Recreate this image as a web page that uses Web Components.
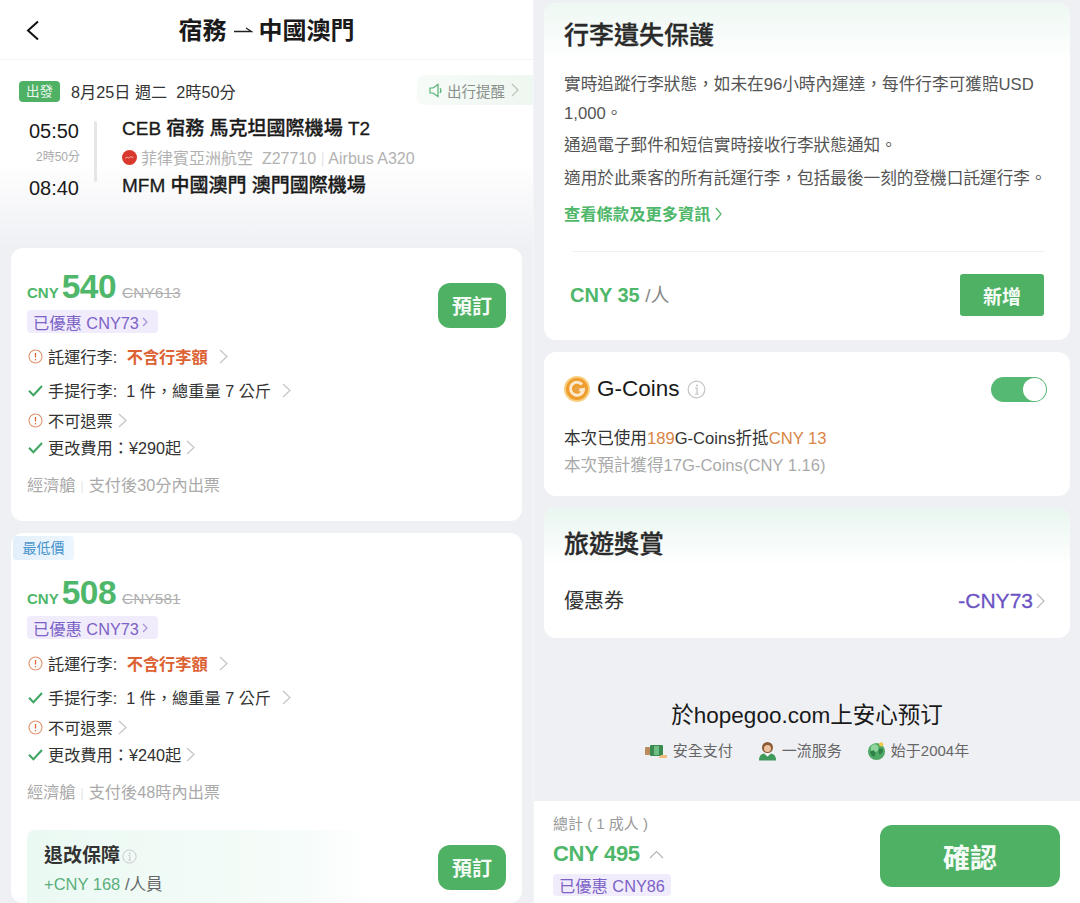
<!DOCTYPE html>
<html lang="zh-Hant"><head><meta charset="utf-8"><title>hopegoo</title>
<style>
html,body{margin:0;padding:0;background:#eff0f4}
body{width:1080px;height:903px;overflow:hidden;font-family:"Liberation Sans","Noto Sans CJK TC",sans-serif}
</style></head><body>
<booking-screens>
  <left-pane slot="left">
    <top-bar title-a="宿務" title-b="中國澳門"></top-bar>
    <flight-summary></flight-summary>
    <fare-card price="540" was="CNY613" off="已優惠 CNY73" fee="¥290起" note="支付後30分內出票" style="margin-bottom:12px"></fare-card>
    <fare-card price="508" was="CNY581" off="已優惠 CNY73" fee="¥240起" note="支付後48時內出票" lowest insurance></fare-card>
  </left-pane>
  <right-pane slot="right">
    <baggage-card></baggage-card>
    <coins-card></coins-card>
    <rewards-card></rewards-card>
    <trust-strip></trust-strip>
    <total-bar></total-bar>
  </right-pane>
</booking-screens>
<script>
const chev=(w,h,c,sw=1.2)=>`<svg width="${w}" height="${h}" viewBox="0 0 ${w} ${h}" style="display:inline-block;flex:none"><path d="M1 1L${w-1} ${h/2}L1 ${h-1}" fill="none" stroke="${c}" stroke-width="${sw}"/></svg>`;
const warnIco=`<svg width="15" height="15" viewBox="0 0 15 15" style="flex:none"><circle cx="7.5" cy="7.5" r="6.5" fill="none" stroke="#e0926c" stroke-width="1.1"/><path d="M7.5 3.900v4.600" stroke="#d9673a" stroke-width="1.3"/><circle cx="7.5" cy="10.700" r=".8" fill="#d9673a"/></svg>`;
const okIco=`<svg width="15" height="15" viewBox="0 0 15 15" style="flex:none"><path d="M1 7.800L5.400 12.200L14 3" fill="none" stroke="#3fa561" stroke-width="2"/></svg>`;
const infoIco=(s,c)=>`<svg width="${s}" height="${s}" viewBox="0 0 20 20" style="flex:none"><circle cx="10" cy="10" r="8.800" fill="none" stroke="${c}" stroke-width="1.3"/><circle cx="10.400" cy="5.800" r="1.100" fill="${c}"/><path d="M8.600 8.600h2v6M8.400 14.800h3.600" fill="none" stroke="${c}" stroke-width="1.3"/></svg>`;
function def(name,css,html){
  customElements.define(name,class extends HTMLElement{
    constructor(){super();this.attachShadow({mode:'open'});}
    connectedCallback(){
      if(this._done)return;this._done=1;
      this.shadowRoot.innerHTML=`<style>${css}</style>`+html(this);
    }
  });
}
def('booking-screens',`:host{display:grid;grid-template-columns:533px 547px;width:1080px;height:903px;overflow:hidden;background:#eff0f4;color:#333}
 ::slotted(*){min-width:0}`,()=>`<slot name="left"></slot><slot name="right"></slot>`);
def('left-pane',`:host{display:block;height:903px;overflow:hidden;background:#eff0f4}`,()=>`<slot></slot>`);
def('right-pane',`:host{display:flex;flex-direction:column;height:903px;overflow:hidden;position:relative;background:#eff0f4;border-left:1px solid #f4f5f8;box-sizing:border-box;padding-top:3px}`,()=>`<slot></slot>`);
def('top-bar',`:host{display:flex;align-items:center;justify-content:center;position:relative;height:60px;background:#fff;border-bottom:1px solid #f3f3f5;box-sizing:border-box}
 .back{position:absolute;left:26px;top:20px}
 h1{margin:0;font-size:24px;line-height:30px;font-weight:700;color:#1a1a1a;display:flex;align-items:center;gap:6px;position:relative;top:1px}`,
 h=>`<svg class="back" width="14" height="21" viewBox="0 0 14 21"><path d="M12 1.500L2 10.500L12 19.500" fill="none" stroke="#111" stroke-width="2"/></svg>
 <h1><span>${h.getAttribute('title-a')}</span><svg width="20" height="10" viewBox="0 0 20 10"><path d="M1 5.500H18.500L13 2" fill="none" stroke="#222" stroke-width="1.3"/></svg><span>${h.getAttribute('title-b')}</span></h1>`);
def('flight-summary',`:host{display:block;height:188px;box-sizing:border-box;padding-top:15px;background:linear-gradient(#fff 0,#fff 55%,#eff0f4 100%);position:relative;color:#222}
 .head{display:flex;align-items:center;height:30px;padding-left:19px}
 .badge{background:#4fb164;color:#e8f6ec;font-size:13.500px;width:41px;height:21px;line-height:21px;text-align:center;border-radius:4px;margin-right:11px;position:relative;top:1px}
 .date{font-size:16.200px;color:#333;position:relative;top:1px;white-space:pre}
 .remind{margin-left:auto;height:30px;width:116px;box-sizing:border-box;padding-left:12px;background:linear-gradient(90deg,#f6fbf7,#eff7f1);border-radius:8px 0 0 8px;display:flex;align-items:center;color:#8a8f8c;font-size:14.500px;gap:4px}
 .body{display:grid;grid-template-columns:94px 3px 1fr;margin-top:11px}
 .times{position:relative;height:76px}
 .t{font-size:20px;line-height:24px;color:#1a1a1a;position:absolute;right:15px}
 .d{position:absolute;right:14px;font-size:12px;line-height:14px;color:#aaa;white-space:nowrap}
 .bar{background:#e6e6e9;height:61px;border-radius:2px}
 .info{padding-left:25px}
 .ap{font-size:19px;line-height:26px;font-weight:500;-webkit-text-stroke:.3px #1a1a1a;color:#1a1a1a;height:26px;white-space:pre}
 .air{display:flex;align-items:center;height:30px;font-size:16px;color:#b2b2b2;gap:4px;white-space:pre}
 .ap2{margin-top:1px}`,
 ()=>`<div class="head"><span class="badge">出發</span><span class="date">8月25日 週二  2時50分</span>
  <div class="remind"><svg width="14" height="15" viewBox="0 0 14 15"><path d="M1 5h3l5-3.500v12L4 10H1zM11 5q2 2.500 0 5" fill="none" stroke="#59b376" stroke-width="1.200"/></svg><span>出行提醒</span><span style="margin-left:2px;display:flex">${chev(8,14,'#b8c4bc')}</span></div></div>
  <div class="body"><div class="times"><span class="t" style="top:3px">05:50</span><span class="d" style="top:34px">2時50分</span><span class="t" style="top:60px">08:40</span></div>
  <div class="bar" style="margin-top:5px"></div>
  <div class="info"><div class="ap">CEB 宿務 馬克坦國際機場 T2</div>
  <div class="air"><svg width="15" height="15" viewBox="0 0 15 15"><circle cx="7.500" cy="7.500" r="7.500" fill="#d9382c"/><path d="M3.500 8.500q1-2 2-1t2 0q1-1.500 2-.5t2 0" fill="none" stroke="#fbdcd8" stroke-width=".8"/></svg><span>菲律賓亞洲航空  Z27710<span style="color:#e8e8e8"> | </span>Airbus A320</span></div>
  <div class="ap ap2">MFM 中國澳門 澳門國際機場</div></div></div>`);
const OFFTAG=`.off{display:inline-flex;align-items:center;gap:3px;background:#f1ecfc;color:#7c62c6;font-size:16.300px;height:23px;padding:0 6px;border-radius:4px;white-space:pre}`;
def('rule-row',`:host{display:flex;align-items:center;height:22px;font-size:16.200px;color:#333;gap:5px;white-space:pre}
 .ic{display:flex;width:15px}
 ::slotted(b){color:#dc6233;font-weight:700}`,
 h=>`<span class="ic">${h.getAttribute('icon')==='warn'?warnIco:okIco}</span><slot></slot>${chev(9,15,'#c4c4c4')}`);
def('fare-card',`:host{display:block;margin:0 11px;background:#fff;border-radius:12px;overflow:hidden;box-sizing:border-box;padding-bottom:23px;position:relative}
 .low{display:block;width:61px;height:24px;line-height:24px;text-align:center;background:linear-gradient(90deg,#e3f0fb,#edf6fd);color:#4793cc;font-size:14px;margin:3px 0 13px 2px;border-radius:3px}
 .main{padding:19px 16px 0 17px}
 :host([lowest]) .main{padding-top:0}
 .top{display:flex;justify-content:space-between}
 .price{display:flex;align-items:baseline;height:40px;color:#4fb76a;font-weight:700;line-height:40px;margin-left:-1px}
 .cur{font-size:15px;margin-right:3px}
 .n{font-size:33.500px;letter-spacing:-.5px}
 .was{font-size:15.500px;font-weight:400;color:#b0b0b0;text-decoration:line-through;margin-left:6px}
 ${OFFTAG}
 .tag{margin-top:3px;height:23px;margin-left:-1px}
 .tag .off{padding-right:10px}
 .btn,.btn2{width:68px;height:45px;background:#4fb164;color:#f4fbf6;font-size:20px;font-weight:700;border-radius:12px;display:flex;align-items:center;justify-content:center}
 .btn{margin-top:16px}
 .rows{margin-top:12px}
 :host([lowest]) .rows{margin-top:13px}
 .foot{margin-top:16px;font-size:16.200px;line-height:22px;color:#aaa;white-space:pre;margin-left:-1px}
 .foot i{font-style:normal;color:#e4e4e4;font-size:12px;margin:0 5px;position:relative;top:-1px}
 .ins{margin:25px 16px 0;background:linear-gradient(90deg,#ebf9f3 0,#f6fcf9 58%,#fff 72%);border-radius:8px 8px 0 0;padding:14px 0 0 17px;display:flex;justify-content:space-between;height:73px;box-sizing:border-box;margin-bottom:-23px}
 .ins .btn2{margin-top:1px}
 .it{font-size:19px;font-weight:700;line-height:24px;color:#333;display:flex;align-items:center;gap:2px}
 .ip{margin-top:5px;font-size:16.500px;line-height:22px;color:#666;white-space:pre}
 .ip b{color:#5aaf7a;font-weight:400}`,
 h=>{const a=n=>h.getAttribute(n);const low=h.hasAttribute('lowest');return `${low?'<span class="low">最低價</span>':''}
 <div class="main"><div class="top"><div><div class="price"><span class="cur">CNY</span><span class="n">${a('price')}</span><span class="was">${a('was')}</span></div>
 <div class="tag"><span class="off">${a('off')}${chev(6,10,'#a793dc')}</span></div></div>${low?'':'<div class="btn">預訂</div>'}</div>
 <div class="rows"><rule-row icon="warn">託運行李: <b>不含行李額</b><span style="width:1px"></span></rule-row>
 <rule-row icon="ok" style="margin-top:12px">手提行李:  1 件，總重量 7 公斤<span style="width:1px"></span></rule-row>
 <rule-row icon="warn" style="margin-top:8px">不可退票</rule-row>
 <rule-row icon="ok" style="margin-top:5px">更改費用：${a('fee')}</rule-row></div>
 <div class="foot">經濟艙<i>|</i>${a('note')}</div></div>
 ${h.hasAttribute('insurance')?`<div class="ins"><div><div class="it">退改保障${infoIco(15,'#c8c8c8')}</div><div class="ip"><b>+CNY 168</b> /人員</div></div><div class="btn2">預訂</div></div>`:''}`});
const CARD=`:host{display:block;margin:0 10px 12px;background:#fff;border-radius:12px;box-sizing:border-box;overflow:hidden}
 .hd{background:linear-gradient(#eef8f3,#fff);font-size:25px;line-height:32px;color:#2a2a2a;font-weight:500;padding:15px 20px 13px;height:60px;box-sizing:border-box}`;
def('baggage-card',CARD+`:host{height:337px}
 .hd{padding-top:16px;-webkit-text-stroke:.3px #2a2a2a}
 .p{margin:0 20px;font-size:16.650px;line-height:29px;color:#555}
 .cta{margin:10px 20px 0;font-size:16.300px;line-height:22px;color:#4fb76a;font-weight:700;display:flex;align-items:center;gap:4px}
 hr{margin:26px 25px 0 28px;border:0;border-top:1px solid #f1f1f1}
 .buy{display:flex;justify-content:space-between;align-items:center;margin:22px 26px 0 26px}
 .pr{font-size:20px;font-weight:700;color:#4fb76a;white-space:pre;margin-bottom:4px}
 .pr span{font-weight:400;color:#888;font-size:19px}
 .add{width:84px;height:42px;background:#4fb164;border-radius:3px;color:#f4fbf6;font-size:19px;font-weight:700;display:flex;align-items:center;justify-content:center}`,
 ()=>`<div class="hd">行李遺失保護</div>
 <p class="p" style="padding-top:7px">實時追蹤行李狀態，如未在96小時內運達，每件行李可獲賠USD 1,000。</p>
 <p class="p" style="margin-top:3px">通過電子郵件和短信實時接收行李狀態通知。</p>
 <p class="p" style="margin-top:4px">適用於此乘客的所有託運行李，包括最後一刻的登機口託運行李。</p>
 <div class="cta">查看條款及更多資訊${chev(7,14,'#4fb76a')}</div><hr>
 <div class="buy"><div class="pr">CNY 35 <span>/人</span></div><div class="add">新增</div></div>`);
def('coins-card',CARD+`:host{height:144px;padding:24px 23px 0 20px}
 .top{display:flex;align-items:center;height:26px}
 .nm{font-size:22.500px;color:#1a1a1a;margin:0 7px 0 7px}
 .tg{margin-left:auto;width:56px;height:25px;border-radius:13px;background:#55b974;position:relative}
 .tg i{position:absolute;right:1px;top:1px;width:23px;height:23px;border-radius:50%;background:#fff}
 .a{margin-top:25px;font-size:16.600px;line-height:24px;color:#333;white-space:pre}
 .a b{font-weight:400;color:#d88544}
 .b{margin-top:3px;font-size:16.600px;line-height:24px;color:#aaa;white-space:pre}`,
 ()=>`<div class="top"><svg width="26" height="26" viewBox="0 0 26 26"><circle cx="13" cy="13" r="13" fill="#f8cf7e"/><circle cx="13" cy="13" r="11" fill="#ee9d2e"/><path d="M18 8.500A6.500 6.500 0 1 0 19.500 13.500L15 14" fill="none" stroke="#fbe9cd" stroke-width="3"/><circle cx="13" cy="13" r="2.500" fill="#e8a64c"/></svg><span class="nm">G-Coins</span>${infoIco(19,'#c4c4c4')}<div class="tg"><i></i></div></div>
 <div class="a">本次已使用<b>189</b>G-Coins折抵<b>CNY 13</b></div><div class="b">本次預計獲得17G-Coins(CNY 1.16)</div>`);
def('rewards-card',CARD+`:host{height:130px;margin-bottom:0}
 .hd{height:58px;padding-top:20px;-webkit-text-stroke:.3px #2a2a2a;background:linear-gradient(#e9f6f0,#fff)}
 .r{display:flex;align-items:center;justify-content:space-between;margin:22px 25px 0 20px;font-size:20px;line-height:26px;color:#333}
 .v{display:flex;align-items:center;gap:3px;color:#6c53c4;font-size:21px;font-weight:500;-webkit-text-stroke:.3px #6c53c4}`,
 ()=>`<div class="hd">旅遊獎賞</div><div class="r"><span>優惠券</span><span class="v">-CNY73${chev(9,16,'#bbb')}</span></div>`);
def('trust-strip',`:host{display:block;text-align:center;padding-top:64px;height:163px;box-sizing:border-box;color:#1a1a1a}
 .t{font-size:22.500px;line-height:28px}
 .l{display:flex;justify-content:center;gap:25px;margin-top:11px;font-size:15px;line-height:20px;color:#666}
 .l span{display:flex;align-items:center;gap:5px}`,
 ()=>`<div class="t">於hopegoo.com上安心预订</div><div class="l">
 <span><svg width="23" height="17" viewBox="0 0 23 17"><rect x="0" y="4" width="5" height="8" rx="1" fill="#b98a5c"/><rect x="5" y="2" width="13" height="11" rx="1" fill="#3a8a52"/><rect x="9" y="3" width="5" height="9" fill="#6fbd84"/><path d="M13 15h9v-3h-6z" fill="#f1bb82"/></svg>安全支付</span>
 <span><svg width="19" height="20" viewBox="0 0 19 20"><circle cx="9.500" cy="6.500" r="5.500" fill="#8b5a36"/><circle cx="9.500" cy="7.500" r="3.500" fill="#eec2a1"/><path d="M1 19.500q0-6.500 5-7l3.500 3 3.500-3q5 .5 5 7z" fill="#3f9a5c"/><path d="M8 13l1.500 2.500L11 13z" fill="#fff"/></svg>一流服务</span>
 <span><svg width="19" height="20" viewBox="0 0 20 20"><circle cx="10" cy="10.500" r="9" fill="#4fa865"/><circle cx="8" cy="7" r="4" fill="#8fd49a"/><path d="M3 11l4-2 2 3-1 4-3-1zM13 7l4 1-1 4-3 2-1-4z" fill="#2f8148"/><circle cx="15" cy="3" r="2.300" fill="#f1c84d"/></svg>始于2004年</span></div>`);
def('total-bar',`:host{position:absolute;left:0;right:0;bottom:0;height:102px;background:#fff;display:flex;justify-content:space-between;padding:0 20px 0 19px;box-sizing:border-box}
 .s{font-size:15px;line-height:20px;color:#999;margin-top:13px;white-space:pre}
 .p{display:flex;align-items:center;gap:9px;margin-top:8px;font-size:22px;line-height:24px;font-weight:700;color:#4fb76a;letter-spacing:-.3px}
 ${OFFTAG}
 .off{margin-top:8px;height:22px}
 .btn{margin-top:24px;width:180px;height:62px;border-radius:12px;background:#4fb164;color:#f4fbf6;font-size:27px;font-weight:700;display:flex;align-items:center;justify-content:center}`,
 ()=>`<div><div class="s">總計 ( 1 成人 )</div><div class="p">CNY 495<svg width="15" height="9" viewBox="0 0 15 9"><path d="M1 8L7.500 1.500L14 8" fill="none" stroke="#b5b5b5" stroke-width="1.200"/></svg></div><div style="display:flex"><span class="off">已優惠 CNY86</span></div></div><div class="btn">確認</div>`);
</script>
</body></html>
